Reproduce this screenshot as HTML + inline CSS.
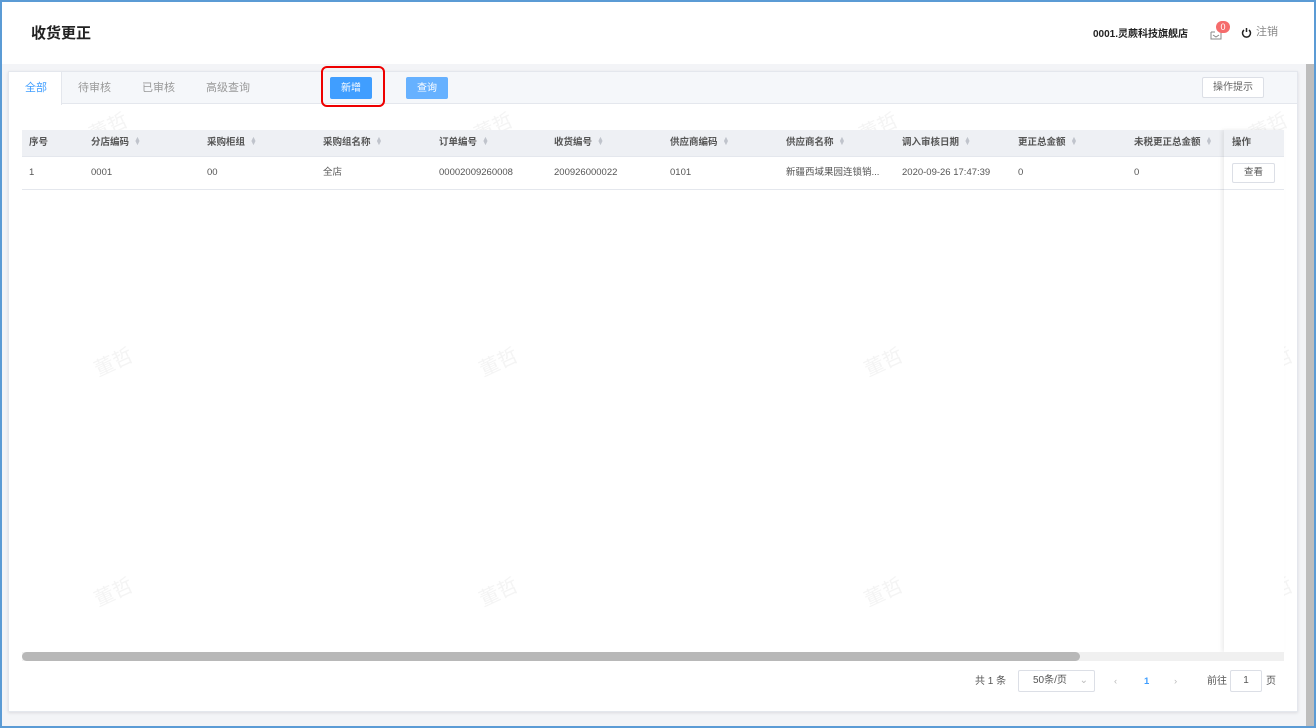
<!DOCTYPE html>
<html><head><meta charset="utf-8"><style>
*{box-sizing:border-box;margin:0;padding:0}
body{width:1316px;height:728px;overflow:hidden;font-family:"Liberation Sans","Noto Sans CJK SC",sans-serif;font-size:10px;color:#555;background:#5b9bd5;position:relative}
.frame{position:absolute;left:2px;top:2px;right:2px;bottom:2px;background:#f3f4f7;overflow:hidden}
.hdr{position:absolute;left:0;top:0;right:0;height:62px;background:#fff}
.title{position:absolute;left:29px;top:23px;font-size:15px;line-height:18px;font-weight:bold;color:#222}
.store{position:absolute;left:1091px;top:27px;font-size:10px;line-height:12px;font-weight:bold;color:#222}
.vs{position:absolute;right:0;top:62px;width:8px;bottom:0;background:#bdbdbd}
.card{position:absolute;left:6px;top:69px;width:1290px;height:641px;background:#fff;border:1px solid #e4e7ed;box-shadow:0 1px 3px rgba(0,0,0,.1);overflow:hidden}
.tabs{position:absolute;left:0;top:0;right:0;height:32px;background:#f5f7fa;border-bottom:1px solid #e4e7ed}
.tab{position:absolute;top:10px;font-size:11px;line-height:12px;color:#999}
.btn{position:absolute;top:5px;height:22px;width:42px;border-radius:2px;color:#fff;font-size:10px;line-height:12px;padding-top:6px;text-align:center}
.th{position:absolute;top:58px;left:13px;width:1203px;height:27px;background:#eef0f4;border-bottom:1px solid #e4e7ed}
.c{position:absolute;font-size:9.5px;line-height:12px;white-space:nowrap}
.th .c{top:7px;font-weight:bold;color:#555}
.row .c{top:95px;color:#555}
.s{display:inline-block;margin-left:5px;color:#c0c4cc;font-size:7px;vertical-align:middle;line-height:4px}
.wm{position:absolute;font-size:20px;line-height:22px;color:#f4f4f4;transform:rotate(-25deg)}
</style></head><body><div class="frame">
<div class="hdr">
<div class="title">收货更正</div>
<div class="store">0001.灵蕨科技旗舰店</div>
<svg style="position:absolute;left:1208px;top:27px" width="12" height="11" viewBox="0 0 12 11"><path d="M1 3h4M1 3v7h10V3" fill="none" stroke="#888" stroke-width="1"/><path d="M3 6l3 2 3-2" fill="none" stroke="#888"/></svg>
<div style="position:absolute;left:1214px;top:19px;width:14px;height:12px;border-radius:7px;background:#f56c6c;color:#fff;font-size:9px;text-align:center;line-height:12px">0</div>
<svg style="position:absolute;left:1239px;top:25px" width="11" height="11" viewBox="0 0 11 11"><path d="M3 3A4 4 0 1 0 8 3" fill="none" stroke="#222" stroke-width="1.5"/><path d="M5.5 1v4" stroke="#222" stroke-width="1.5"/></svg>
<div style="position:absolute;left:1254px;top:24px;font-size:11px;line-height:12px;color:#888">注销</div>
</div>
<div class="vs"></div>
<div class="card">
<div class="tabs">
<div style="position:absolute;left:0;top:0;width:53px;height:33px;background:#fff;border-right:1px solid #e4e7ed"></div>
<div class="tab" style="left:16px;color:#409eff">全部</div>
<div class="tab" style="left:69px">待审核</div>
<div class="tab" style="left:133px">已审核</div>
<div class="tab" style="left:197px">高级查询</div>
<div class="btn" style="left:321px;background:#409eff">新增</div>
<div class="btn" style="left:397px;background:#66b1ff">查询</div>
<div style="position:absolute;left:1193px;top:5px;width:62px;height:21px;border:1px solid #dcdfe6;background:#fff;border-radius:2px;text-align:center;line-height:12px;padding-top:4px;font-size:10px;color:#666">操作提示</div>
</div>
<div class="wm" style="left:80px;top:45px">董哲</div><div class="wm" style="left:465px;top:45px">董哲</div><div class="wm" style="left:850px;top:45px">董哲</div><div class="wm" style="left:1240px;top:45px">董哲</div>
<div class="wm" style="left:85px;top:280px">董哲</div><div class="wm" style="left:470px;top:280px">董哲</div><div class="wm" style="left:855px;top:280px">董哲</div><div class="wm" style="left:1245px;top:280px">董哲</div>
<div class="wm" style="left:85px;top:510px">董哲</div><div class="wm" style="left:470px;top:510px">董哲</div><div class="wm" style="left:855px;top:510px">董哲</div><div class="wm" style="left:1245px;top:510px">董哲</div>
<div class="th">
<div class="c" style="left:7px">序号</div>
<div class="c" style="left:69px">分店编码<span class="s">▲<br>▼</span></div>
<div class="c" style="left:185px">采购柜组<span class="s">▲<br>▼</span></div>
<div class="c" style="left:301px">采购组名称<span class="s">▲<br>▼</span></div>
<div class="c" style="left:417px">订单编号<span class="s">▲<br>▼</span></div>
<div class="c" style="left:532px">收货编号<span class="s">▲<br>▼</span></div>
<div class="c" style="left:648px">供应商编码<span class="s">▲<br>▼</span></div>
<div class="c" style="left:764px">供应商名称<span class="s">▲<br>▼</span></div>
<div class="c" style="left:880px">调入审核日期<span class="s">▲<br>▼</span></div>
<div class="c" style="left:996px">更正总金额<span class="s">▲<br>▼</span></div>
<div class="c" style="left:1112px">未税更正总金额<span class="s">▲<br>▼</span></div>
</div>
<div class="row">
<div class="c" style="left:20px">1</div><div class="c" style="left:82px">0001</div><div class="c" style="left:198px">00</div><div class="c" style="left:314px">全店</div><div class="c" style="left:430px">00002009260008</div><div class="c" style="left:545px">200926000022</div><div class="c" style="left:661px">0101</div><div class="c" style="left:777px">新疆西域果园连锁销...</div><div class="c" style="left:893px">2020-09-26 17:47:39</div><div class="c" style="left:1009px">0</div><div class="c" style="left:1125px">0</div>
</div>
<div style="position:absolute;left:13px;top:117px;width:1203px;height:1px;background:#e4e7ed"></div>
<div style="position:absolute;left:1215px;top:58px;width:60px;height:522px;background:#fff;box-shadow:-2px 0 4px rgba(0,0,0,.08)">
<div style="height:27px;background:#eef0f4;border-bottom:1px solid #e4e7ed;font-weight:bold;font-size:9.5px;line-height:12px;padding:7px 0 0 8px">操作</div>
<div style="position:absolute;left:8px;top:33px;width:43px;height:20px;border:1px solid #dcdfe6;border-radius:2px;text-align:center;line-height:12px;padding-top:3px;font-size:9.5px">查看</div>
<div style="position:absolute;left:0;top:59px;width:60px;height:1px;background:#e4e7ed"></div>
</div>
<div style="position:absolute;left:13px;top:580px;width:1262px;height:9px;background:#f0f0f0"></div>
<div style="position:absolute;left:13px;top:580px;width:1058px;height:9px;background:#b8b8b8;border-radius:5px"></div>
<div class="c" style="left:966px;top:604px;font-size:10px">共 1 条</div>
<div style="position:absolute;left:1009px;top:598px;width:77px;height:22px;border:1px solid #dcdfe6;border-radius:2px;font-size:10px;line-height:12px;padding:4px 0 0 14px">50条/页<span style="position:absolute;right:6px;color:#bbb">⌄</span></div>
<div class="c" style="left:1105px;top:604px;color:#bbb">‹</div>
<div class="c" style="left:1135px;top:604px;color:#409eff;font-weight:bold">1</div>
<div class="c" style="left:1165px;top:604px;color:#bbb">›</div>
<div class="c" style="left:1198px;top:604px;font-size:10px">前往</div>
<div style="position:absolute;left:1221px;top:598px;width:32px;height:22px;border:1px solid #dcdfe6;border-radius:2px;text-align:center;line-height:12px;padding-top:4px">1</div>
<div class="c" style="left:1257px;top:604px;font-size:10px">页</div>
</div>
<div style="position:absolute;left:319px;top:64px;width:64px;height:41px;border:2px solid #e00;border-radius:6px"></div>
</div></body></html>
